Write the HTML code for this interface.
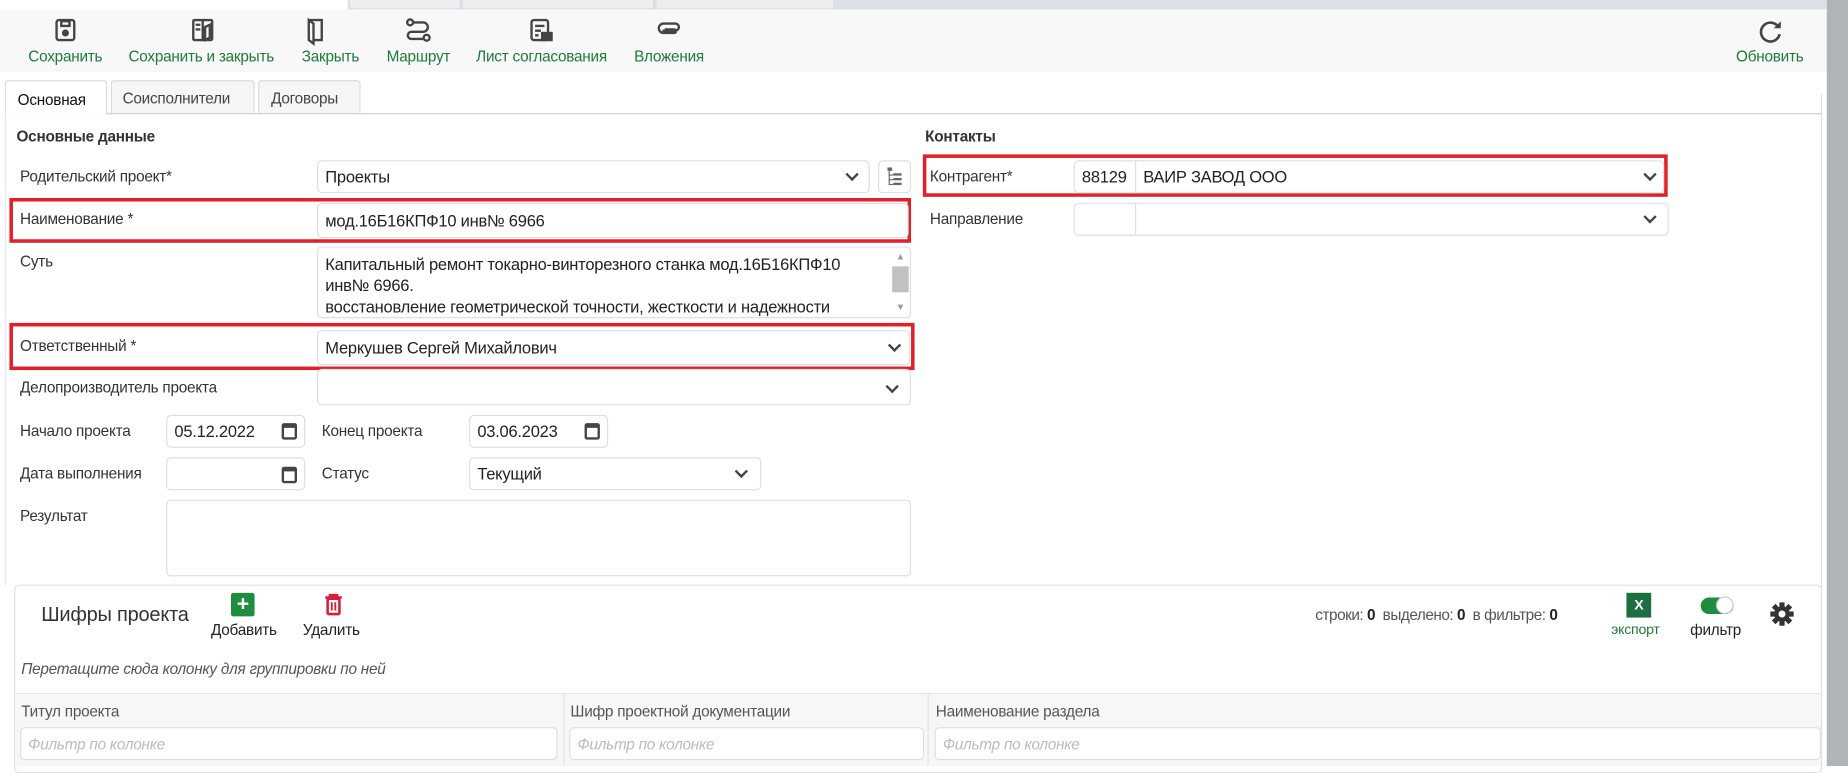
<!DOCTYPE html>
<html><head><meta charset="utf-8"><style>
*{box-sizing:border-box;margin:0;padding:0}
html,body{width:1848px;height:766px;overflow:hidden;background:#fff}
#w{position:absolute;left:0;top:0;width:1568px;height:650px;transform:scale(1.17857);transform-origin:0 0;font-family:"Liberation Sans","Noto Sans CJK SC",sans-serif;font-size:13px;color:#333;letter-spacing:-0.2px}
.a{position:absolute}
.inp{position:absolute;border:1px solid #dcdfe6;border-radius:4px;background:#fff;font-size:14px;color:#222;padding-left:6px;display:flex;align-items:center}
.red{position:absolute;border:3px solid #e0202a}
.lbl{position:absolute;font-size:13px;color:#333}
.chev{position:absolute;width:8px;height:8px;border-right:2px solid #444;border-bottom:2px solid #444;transform:rotate(45deg)}
.tb{position:absolute;top:40px;font-size:13px;color:#1f7a3a;text-align:center;white-space:nowrap}
.cal{position:absolute;width:13px;height:14px;border:2px solid #444;border-top-width:4px;border-radius:2px}
</style></head><body><div id="w">
<div class="a" style="left:295px;top:0;width:1255px;height:8px;background:#dcdfe3"></div>
<div class="a" style="left:297px;top:0;width:93px;height:7px;background:#eceef0;border-radius:0 0 3px 3px"></div>
<div class="a" style="left:393px;top:0;width:161px;height:7px;background:#eceef0"></div>
<div class="a" style="left:557px;top:0;width:150px;height:7px;background:#eceef0"></div>
<div class="a" style="left:0;top:8px;width:1550px;height:53px;background:#f8f8f8"></div>
<svg class="a" style="left:0;top:14px" width="1550" height="26" fill="none" stroke="#444" stroke-width="2">
<rect x="48" y="3" width="15" height="17" rx="2"/><rect x="52" y="4" width="7" height="4"/><circle cx="55.5" cy="14" r="2" fill="#444"/>
<rect x="164" y="3" width="16" height="17" rx="1"/><path d="M172 3v17M166 7h4M166 11h4M174 9l4-2v11l-4 2z"/>
<path d="M262 3h11v17h-7M262 3l4 3v17l-4-3z"/>
<circle cx="348" cy="5" r="2.5"/><circle cx="362" cy="18" r="2.5"/><path d="M351 5h8a4 4 0 010 8h-10a3 3 0 000 6h10"/>
<rect x="451" y="3" width="14" height="17" rx="2"/><path d="M454 8h8M454 12h5M454 16h3"/><rect x="460" y="14" width="8" height="6" fill="#444"/>
<path d="M562 12h11a3 3 0 000-6h-10a4 4 0 000 8h9a1.5 1.5 0 000-3h-8" stroke-width="2"/>
<path d="M1509 9a8 8 0 10 1 6" stroke-width="2.2"/><path d="M1511 4v6h-6z" fill="#444" stroke="none"/>
</svg>
<div class="tb" style="left:24px">Сохранить</div>
<div class="tb" style="left:109px">Сохранить и закрыть</div>
<div class="tb" style="left:256px">Закрыть</div>
<div class="tb" style="left:328px">Маршрут</div>
<div class="tb" style="left:404px">Лист согласования</div>
<div class="tb" style="left:538px">Вложения</div>
<div class="tb" style="left:1473px">Обновить</div>
<div class="a" style="left:1550px;top:0;width:18px;height:650px;background:#b0b3b8"></div>
<div class="a" style="left:1545px;top:80px;width:1px;height:570px;background:#dde1e6"></div>
<div class="a" style="left:4px;top:68px;width:87px;height:29px;border:1px solid #d4d8de;border-bottom:none;background:#fff;border-radius:3px 3px 0 0;padding:8px 0 0 10px;color:#111;font-size:13px;z-index:2">Основная</div>
<div class="a" style="left:94px;top:68px;width:122px;height:28px;border:1px solid #d4d8de;border-bottom:none;background:#f5f6f8;border-radius:3px 3px 0 0;padding:7px 0 0 9px;font-size:13px;color:#444">Соисполнители</div>
<div class="a" style="left:219px;top:68px;width:87px;height:28px;border:1px solid #d4d8de;border-bottom:none;background:#f5f6f8;border-radius:3px 3px 0 0;padding:7px 0 0 10px;font-size:13px;color:#444">Договоры</div>
<div class="a" style="left:4px;top:96px;width:1542px;height:1px;background:#c9d0da"></div>
<div class="a" style="left:4px;top:97px;width:1px;height:400px;background:#e6e8eb"></div>
<div class="a" style="left:14px;top:108px;font-weight:bold;font-size:13px;color:#333">Основные данные</div>
<div class="a" style="left:785px;top:108px;font-weight:bold;font-size:13px;color:#333">Контакты</div>
<div class="lbl" style="left:17px;top:142px">Родительский проект*</div>
<div class="inp" style="left:269px;top:136px;width:469px;height:28px">Проекты</div><div class="chev" style="left:719px;top:144px"></div>
<div class="inp" style="left:745px;top:136px;width:28px;height:28px"></div>
<svg class="a" style="left:751px;top:142px" width="16" height="16" fill="#666"><rect x="2" y="0" width="4" height="3"/><rect x="7" y="5" width="7" height="2"/><rect x="7" y="9" width="7" height="2"/><rect x="7" y="13" width="7" height="2"/><rect x="3" y="3" width="1" height="11"/><rect x="3" y="6" width="4" height="1"/><rect x="3" y="10" width="4" height="1"/><rect x="3" y="14" width="4" height="1"/></svg>
<div class="red" style="left:8px;top:168px;width:765px;height:38px"></div>
<div class="lbl" style="left:17px;top:178px">Наименование *</div>
<div class="inp" style="left:269px;top:172px;width:502px;height:30px">мод.16Б16КПФ10 инв№ 6966</div>
<div class="lbl" style="left:17px;top:214px">Суть</div>
<div class="inp" style="left:269px;top:209px;width:504px;height:61px;align-items:flex-start;padding-top:5px;line-height:18px;overflow:hidden">Капитальный ремонт токарно-винторезного станка мод.16Б16КПФ10<br>инв№ 6966.<br>восстановление геометрической точности, жесткости и надежности</div>
<div class="a" style="left:757px;top:226px;width:14px;height:22px;background:#c1c1c1"></div>
<div class="a" style="left:760px;top:213px;font-size:8px;color:#999">▲</div>
<div class="a" style="left:760px;top:256px;font-size:8px;color:#999">▼</div>
<div class="red" style="left:8px;top:274px;width:768px;height:40px"></div>
<div class="lbl" style="left:17px;top:286px">Ответственный *</div>
<div class="inp" style="left:269px;top:280px;width:503px;height:30px">Меркушев Сергей Михайлович</div><div class="chev" style="left:755px;top:289px"></div>
<div class="lbl" style="left:17px;top:321px">Делопроизводитель проекта</div>
<div class="inp" style="left:269px;top:313px;width:504px;height:31px"></div><div class="chev" style="left:753px;top:324px"></div>
<div class="lbl" style="left:17px;top:358px">Начало проекта</div>
<div class="inp" style="left:141px;top:352px;width:118px;height:28px">05.12.2022</div><div class="cal" style="left:239px;top:359px"></div>
<div class="lbl" style="left:273px;top:358px">Конец проекта</div>
<div class="inp" style="left:398px;top:352px;width:118px;height:28px">03.06.2023</div><div class="cal" style="left:496px;top:359px"></div>
<div class="lbl" style="left:17px;top:394px">Дата выполнения</div>
<div class="inp" style="left:141px;top:388px;width:118px;height:28px"></div><div class="cal" style="left:239px;top:396px"></div>
<div class="lbl" style="left:273px;top:394px">Статус</div>
<div class="inp" style="left:398px;top:388px;width:248px;height:28px">Текущий</div><div class="chev" style="left:625px;top:396px"></div>
<div class="lbl" style="left:17px;top:430px">Результат</div>
<div class="inp" style="left:141px;top:424px;width:632px;height:65px"></div>
<div class="red" style="left:783px;top:131px;width:632px;height:36px"></div>
<div class="lbl" style="left:789px;top:142px">Контрагент*</div>
<div class="inp" style="left:911px;top:136px;width:53px;height:28px;border-radius:4px 0 0 4px">88129</div>
<div class="inp" style="left:963px;top:136px;width:449px;height:28px;border-radius:0 4px 4px 0">ВАИР ЗАВОД ООО</div><div class="chev" style="left:1396px;top:144px"></div>
<div class="lbl" style="left:789px;top:178px">Направление</div>
<div class="inp" style="left:911px;top:172px;width:53px;height:28px;border-radius:4px 0 0 4px"></div>
<div class="inp" style="left:963px;top:172px;width:453px;height:28px;border-radius:0 4px 4px 0"></div><div class="chev" style="left:1396px;top:180px"></div>
<div class="a" style="left:12px;top:496px;width:1534px;height:160px;border:1px solid #dfe2e7;border-radius:4px"></div>
<div class="a" style="left:35px;top:512px;font-size:17px;color:#333">Шифры проекта</div>
<div class="a" style="left:196px;top:503px;width:20px;height:20px;background:#1e8e3e;border-radius:2px;color:#fff;font-size:18px;line-height:19px;text-align:center;font-weight:bold">+</div>
<div class="a" style="left:179px;top:527px;font-size:13px;color:#222">Добавить</div>
<svg class="a" style="left:274px;top:503px" width="18" height="20" fill="none" stroke="#d6203a" stroke-width="2.2"><path d="M2 4h14M6 4V2h6v2"/><rect x="4" y="5" width="10" height="13" rx="1"/><path d="M7.5 8v7M10.5 8v7" stroke-width="1.6"/></svg>
<div class="a" style="left:257px;top:527px;font-size:13px;color:#222">Удалить</div>
<div class="a" style="left:1116px;top:514px;font-size:13px;color:#555;letter-spacing:-0.4px">строки: <b style="color:#222">0</b> &nbsp;выделено: <b style="color:#222">0</b> &nbsp;в фильтре: <b style="color:#222">0</b></div>
<div class="a" style="left:1380px;top:503px;width:21px;height:21px;background:#1d6f42;color:#fff;font-size:12px;font-weight:bold;text-align:center;line-height:21px">X</div>
<div class="a" style="left:1367px;top:527px;font-size:12px;color:#1f7a3a">экспорт</div>
<div class="a" style="left:1443px;top:507px;width:28px;height:14px;background:#1e8e3e;border-radius:7px"></div>
<div class="a" style="left:1456px;top:506px;width:15px;height:15px;background:#fff;border-radius:50%;border:1px solid #ccc"></div>
<div class="a" style="left:1434px;top:527px;font-size:13px;color:#222">фильтр</div>
<svg class="a" style="left:1502px;top:511px" width="20" height="20"><g transform="translate(10 10)" fill="#333"><circle r="6.5"/><g id="t"><rect x="-2.2" y="-10" width="4.4" height="5"/></g><use href="#t" transform="rotate(45)"/><use href="#t" transform="rotate(90)"/><use href="#t" transform="rotate(135)"/><use href="#t" transform="rotate(180)"/><use href="#t" transform="rotate(225)"/><use href="#t" transform="rotate(270)"/><use href="#t" transform="rotate(315)"/><circle r="3" fill="#fff"/></g></svg>
<div class="a" style="left:18px;top:560px;font-size:13px;font-style:italic;color:#555">Перетащите сюда колонку для группировки по ней</div>
<div class="a" style="left:13px;top:588px;width:1532px;height:1px;background:#e3e5e8"></div>
<div class="a" style="left:13px;top:589px;width:1532px;height:61px;background:#f7f7f7"></div>
<div class="a" style="left:478px;top:589px;width:1px;height:61px;background:#e0e2e6"></div>
<div class="a" style="left:787px;top:589px;width:1px;height:61px;background:#e0e2e6"></div>
<div class="a" style="left:18px;top:596px;font-size:13px;color:#555">Титул проекта</div>
<div class="a" style="left:484px;top:596px;font-size:13px;color:#555">Шифр проектной документации</div>
<div class="a" style="left:794px;top:596px;font-size:13px;color:#555">Наименование раздела</div>
<div class="inp" style="left:17px;top:617px;width:456px;height:28px;font-style:italic;color:#bbb;font-size:13px">Фильтр по колонке</div>
<div class="inp" style="left:483px;top:617px;width:301px;height:28px;font-style:italic;color:#bbb;font-size:13px">Фильтр по колонке</div>
<div class="inp" style="left:793px;top:617px;width:752px;height:28px;font-style:italic;color:#bbb;font-size:13px">Фильтр по колонке</div>
</div></body></html>
